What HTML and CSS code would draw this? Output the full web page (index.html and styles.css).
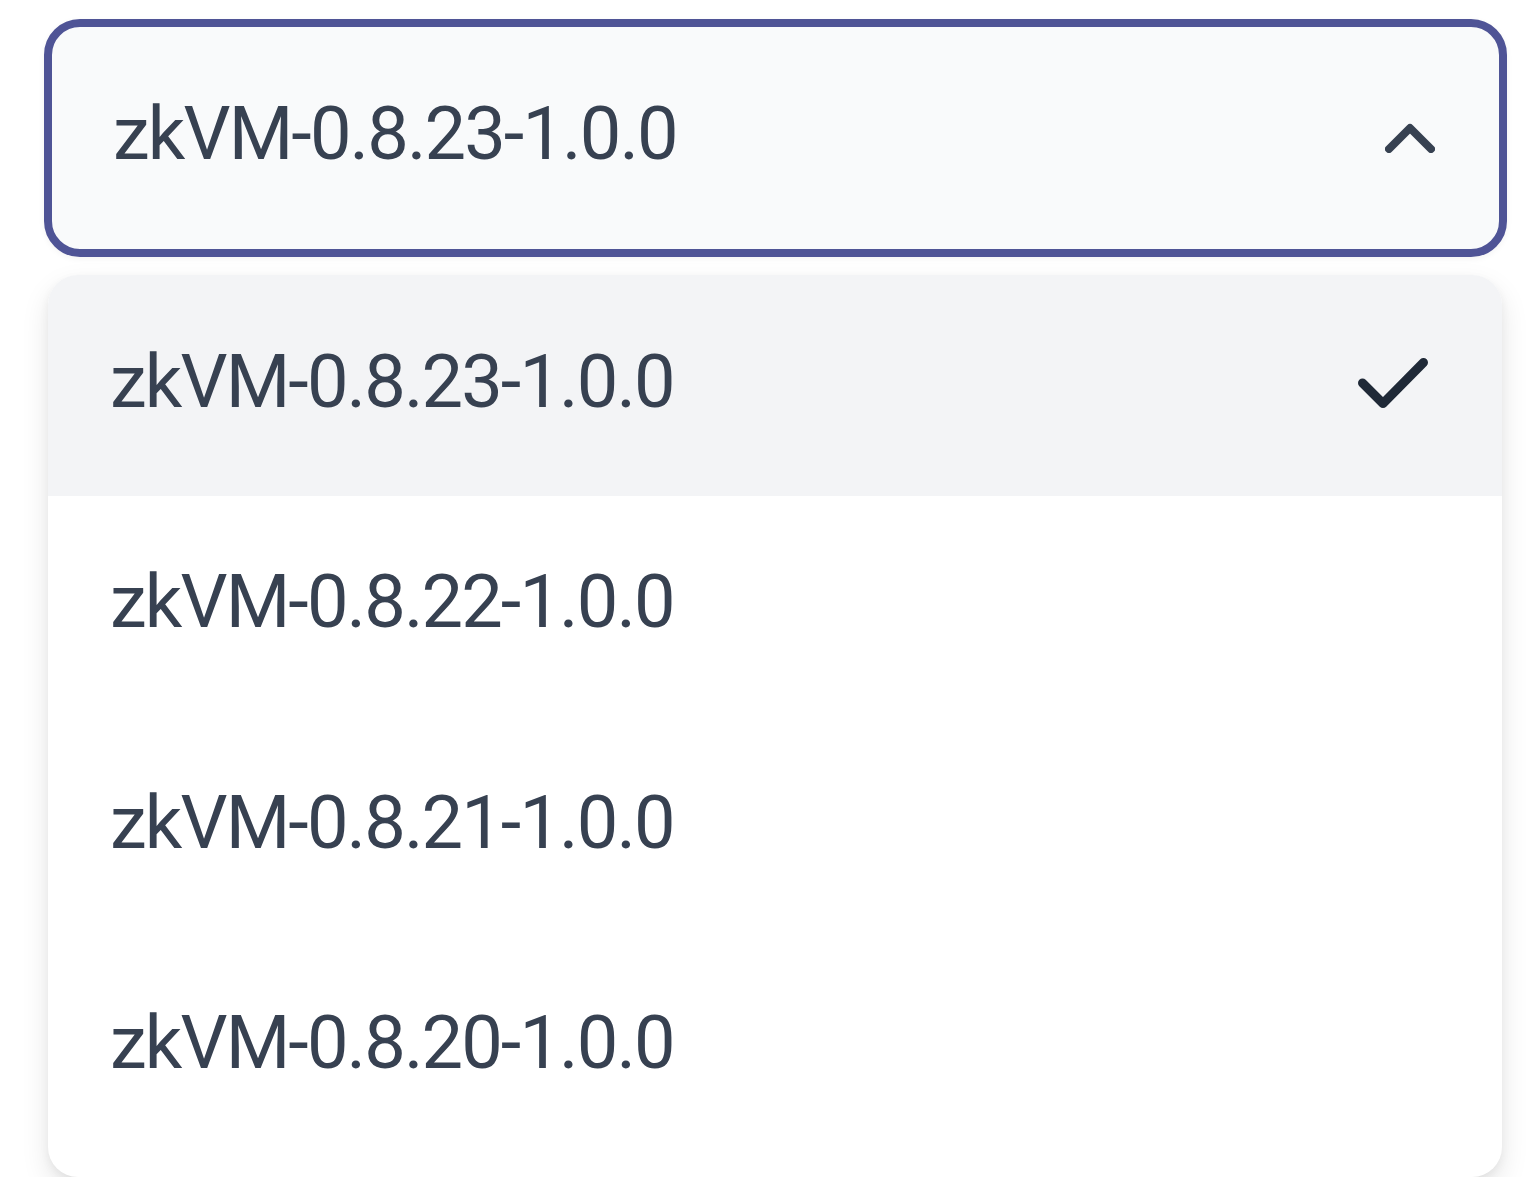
FILE: index.html
```html
<!DOCTYPE html>
<html lang="en">
<head>
<meta charset="utf-8">
<title>Version select</title>
<link rel="stylesheet" href="styles.css">
</head>
<body>
<div class="page">
  <div class="select">
    <button class="trigger" type="button">
      <span class="trigger-label">zkVM-0.8.23-1.0.0</span>
      <svg class="chevron" width="50" height="30" viewBox="0 0 50 30" aria-hidden="true"><polyline points="4,26 25,5 46,26" fill="none" stroke="#374151" stroke-width="8" stroke-linecap="round" stroke-linejoin="round"/></svg>
    </button>
    <ul class="menu">
      <li class="option active">
        <span class="option-label">zkVM-0.8.23-1.0.0</span>
        <svg class="check" width="70" height="50" viewBox="0 0 70 50" aria-hidden="true"><polyline points="4.5,25 25,45.5 65.5,4.5" fill="none" stroke="#1f2937" stroke-width="9" stroke-linecap="round" stroke-linejoin="round"/></svg>
      </li>
      <li class="option"><span class="option-label">zkVM-0.8.22-1.0.0</span></li>
      <li class="option"><span class="option-label">zkVM-0.8.21-1.0.0</span></li>
      <li class="option"><span class="option-label">zkVM-0.8.20-1.0.0</span></li>
    </ul>
  </div>
</div>
</body>
</html>
```
FILE: styles.css
```css
* { box-sizing: border-box; }
html, body { margin: 0; padding: 0; background: #ffffff; }
body { font-family: Roboto, "Liberation Sans", sans-serif; color: #374151; }
.page { padding: 19px 0 0 44px; }
.select { width: 1463px; display: flex; flex-direction: column; }
.trigger {
  display: flex; align-items: center; justify-content: space-between;
  width: 1463px; height: 238px;
  padding: 0 64px 0 61px;
  border: 8px solid #4f5496; border-radius: 36px;
  background: #f9fafb;
  box-shadow: 0 2px 6px rgba(0,0,0,0.05);
  font-family: inherit; color: #374151;
  font-size: 74px; letter-spacing: -1.9px; text-align: left; cursor: pointer;
}
.trigger-label { padding-bottom: 10px; }
.chevron { display: block; flex: none; }
.menu {
  list-style: none; margin: 18px 0 0 4px; padding: 0 0 20px 0;
  width: 1454px;
  background: #ffffff; border-radius: 30px; overflow: hidden;
  box-shadow: 0 12px 28px rgba(0,0,0,0.10), 0 4px 10px rgba(0,0,0,0.05);
}
.option {
  display: flex; align-items: center; justify-content: space-between;
  height: 220.5px; padding: 0 74px 0 62px;
  font-size: 74px; letter-spacing: -1.9px;
}
.option.active { background: #f3f4f6; }
.option-label { padding-bottom: 8px; }
.check { display: block; flex: none; margin-bottom: 4px; }
```
